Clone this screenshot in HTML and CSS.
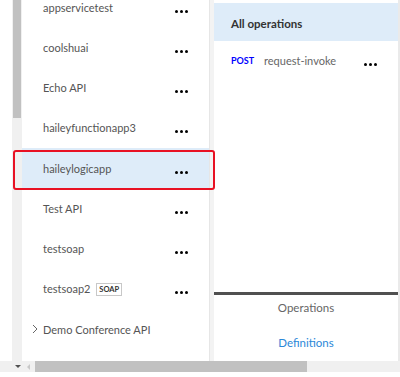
FILE: index.html
```html
<!DOCTYPE html>
<html lang="en">
<head>
    <meta charset="UTF-8">
    <meta name="viewport" content="width=device-width, initial-scale=1.0">
    <title>APIs</title>
    <link rel="stylesheet" href="styles.css">
</head>
<body>
    <div class="frame">
        <div class="main">
            <div class="edge-left"></div>

            <!-- vertical scrollbar of the API list -->
            <div class="vscroll">
                <div class="vscroll-thumb"></div>
            </div>

            <!-- API list -->
            <div class="api-list">
                <div class="api-items">
                    <div class="api-row"><span class="api-name">appservicetest</span><span class="more"><i></i><i></i><i></i></span></div>
                    <div class="api-row"><span class="api-name">coolshuai</span><span class="more"><i></i><i></i><i></i></span></div>
                    <div class="api-row"><span class="api-name">Echo API</span><span class="more"><i></i><i></i><i></i></span></div>
                    <div class="api-row"><span class="api-name">haileyfunctionapp3</span><span class="more"><i></i><i></i><i></i></span></div>
                    <div class="api-row selected"><span class="api-name">haileylogicapp</span><span class="more"><i></i><i></i><i></i></span></div>
                    <div class="api-row"><span class="api-name">Test API</span><span class="more"><i></i><i></i><i></i></span></div>
                    <div class="api-row"><span class="api-name">testsoap</span><span class="more"><i></i><i></i><i></i></span></div>
                    <div class="api-row"><span class="api-name">testsoap2 <span class="badge">SOAP</span></span><span class="more"><i></i><i></i><i></i></span></div>
                    <div class="api-row group">
                        <svg class="chevron" width="6" height="10" viewBox="0 0 6 10"><polyline points="1,1 5,5 1,9" fill="none" stroke="#666" stroke-width="1"/></svg>
                        <span class="api-name">Demo Conference API</span>
                    </div>
                </div>
            </div>

            <div class="divider"></div>

            <!-- operations panel -->
            <div class="ops">
                <div class="ops-top">
                    <div class="ops-all">All operations</div>
                    <div class="op-row">
                        <span class="verb">POST</span>
                        <span class="op-name">request-invoke</span>
                        <span class="more"><i></i><i></i><i></i></span>
                    </div>
                </div>
                <div class="ops-tabs">
                    <div class="tab">Operations</div>
                    <div class="tab link">Definitions</div>
                </div>
            </div>

            <div class="edge-right"></div>
        </div>

        <!-- horizontal scrollbar -->
        <div class="hscroll">
            <span class="corner-arrow"></span>
            <span class="left-arrow"></span>
            <div class="hscroll-thumb"></div>
        </div>

        <!-- annotation around the selected api -->
        <div class="mark"></div>
    </div>
</body>
</html>
```

FILE: styles.css
```css
body {
    margin: 0;
    padding: 0;
    font-family: Lato, "Noto Sans", Arial, sans-serif;
    background: #ffffff;
}

.frame {
    position: relative;
    width: 400px;
    height: 377px;
    overflow: hidden;
}

.main {
    display: flex;
    height: 361px;
}

.edge-left {
    width: 12px;
    background: #ffffff;
}

.vscroll {
    width: 10px;
    background: #f0f0f0;
    padding: 0 1px;
    box-sizing: border-box;
}

.vscroll-thumb {
    height: 118px;
    background: #c1c1c1;
}

.api-list {
    width: 187px;
    overflow: hidden;
    background: #ffffff;
}

.api-items {
    margin-top: -13px;
}

.api-row {
    display: flex;
    align-items: center;
    justify-content: space-between;
    height: 40.25px;
    padding: 0 21px 0 21px;
    font-size: 11px;
    color: #555;
}

.api-row.selected {
    background: #deecf9;
}

.api-row.group {
    justify-content: flex-start;
    padding-left: 10px;
}

.chevron {
    margin-right: 5px;
}

.badge {
    display: inline-block;
    margin-left: 3px;
    padding: 1px 2px;
    border: 1px solid #c8c8c8;
    font-size: 7.5px;
    font-weight: bold;
    color: #333;
    vertical-align: 1px;
}

.more {
    display: flex;
    gap: 2px;
    margin-top: 8px;
}

.more i {
    width: 3px;
    height: 3px;
    border-radius: 50%;
    background: #000;
}

.divider {
    width: 5px;
    background: #f3f3f3;
    border-left: 1px solid #e6e6e6;
    box-sizing: border-box;
}

.ops {
    width: 184px;
    display: flex;
    flex-direction: column;
    justify-content: space-between;
    background: #ffffff;
}

.ops-all {
    margin-top: 3px;
    height: 38px;
    display: flex;
    align-items: center;
    padding: 3px 0 0 17px;
    box-sizing: border-box;
    background: #deecf9;
    font-size: 11.5px;
    font-weight: bold;
    color: #333;
}

.op-row {
    display: flex;
    align-items: center;
    padding: 13px 21px 0 17px;
    font-size: 11px;
}

.verb {
    font-size: 9px;
    font-weight: bold;
    color: #0000ff;
    width: 33px;
}

.op-name {
    flex: 1;
    color: #666;
}

.op-row .more {
    margin-top: 8px;
}

.ops-tabs {
    border-top: 3px solid #505050;
    margin-top: auto;
}

.tab {
    text-align: center;
    height: 34px;
    line-height: 26px;
    font-size: 11.5px;
    color: #666;
}

.tab.link {
    height: 32px;
    color: #2b88d8;
    line-height: 28px;
}

.edge-right {
    width: 2px;
    background: #eaeaea;
}

.hscroll {
    display: flex;
    align-items: center;
    height: 11px;
    background: #f0f0f0;
}

.corner-arrow {
    width: 0;
    height: 0;
    margin-left: 15px;
    border-left: 3px solid transparent;
    border-right: 3px solid transparent;
    border-top: 3px solid #505050;
}

.left-arrow {
    width: 0;
    height: 0;
    margin-left: 6px;
    border-top: 3px solid transparent;
    border-bottom: 3px solid transparent;
    border-right: 3px solid #c8c8c8;
}

.hscroll-thumb {
    margin-left: 5px;
    width: 272px;
    height: 11px;
    background: #c1c1c1;
}

.mark {
    position: absolute;
    left: 13px;
    top: 150px;
    width: 198px;
    height: 36px;
    border: 2px solid #e81123;
    border-radius: 3px;
}
```
